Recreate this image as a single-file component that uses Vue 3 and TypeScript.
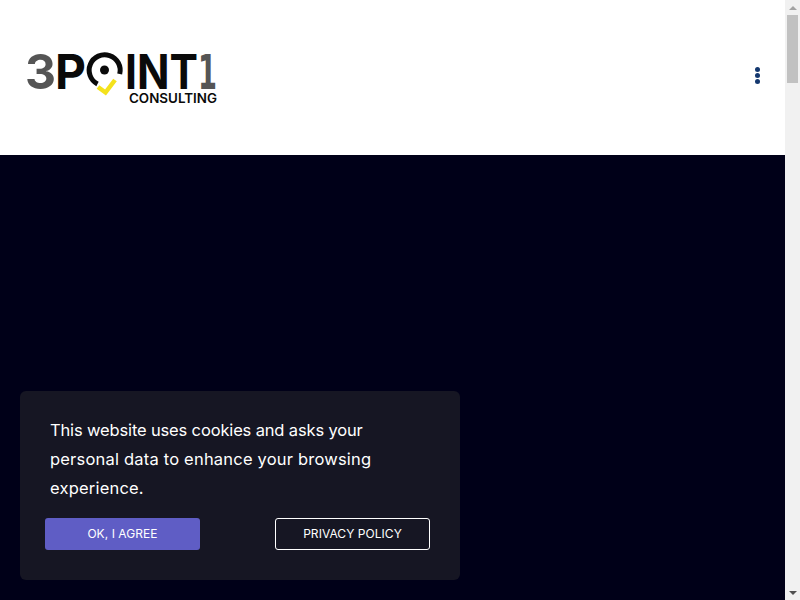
<script setup lang="ts">
const lines: string[] = [
  'This website uses cookies and asks your',
  'personal data to enhance your browsing',
  'experience.',
]
</script>

<template>
  <div class="page">
    <div class="view">
      <header class="top">
        <a class="logo" aria-label="3Point1 Consulting">
          <svg width="200" height="80" viewBox="0 0 200 80">
            <text class="mark grey" x="0" y="52" textLength="31" lengthAdjust="spacingAndGlyphs">3</text>
            <text class="mark" x="30" y="52" textLength="31" lengthAdjust="spacingAndGlyphs">P</text>
            <path d="M72.5 47 A15.5 15.5 0 1 1 94.7 37" fill="none" stroke="#0a0a0a" stroke-width="5" />
            <circle cx="79.5" cy="33" r="4.5" fill="#0a0a0a" />
            <path d="M73 50 L80.5 55.5 L90 43" fill="none" stroke="#f4e21c" stroke-width="4.5" />
            <text class="mark" x="100" y="52" textLength="73" lengthAdjust="spacingAndGlyphs">INT</text>
            <text class="mark grey one" x="173" y="52" textLength="19" lengthAdjust="spacingAndGlyphs">1</text>
            <text class="sub" x="104" y="66" textLength="88" lengthAdjust="spacingAndGlyphs">CONSULTING</text>
          </svg>
        </a>
        <button class="menu" aria-label="Menu"><i></i><i></i><i></i></button>
      </header>
      <main class="hero"></main>
      <aside class="cookie">
        <p class="message">
          <span v-for="line in lines" :key="line">{{ line }}</span>
        </p>
        <div class="actions">
          <button class="btn agree">OK, I AGREE</button>
          <button class="btn policy">PRIVACY POLICY</button>
        </div>
      </aside>
    </div>
    <div class="scrollbar" aria-hidden="true">
      <span class="arrow up"></span>
      <div class="track"><div class="thumb"></div></div>
      <span class="arrow down"></span>
    </div>
  </div>
</template>

<style>
html, body { margin: 0; }
</style>

<style scoped>
.page {
  display: flex;
  width: 800px;
  height: 600px;
  overflow: hidden;
  font-family: "Inter", "Noto Sans", sans-serif;
}
.view {
  position: relative;
  flex: 1;
  display: flex;
  flex-direction: column;
}
.top {
  height: 155px;
  flex: none;
  background: #fff;
  display: flex;
  align-items: center;
  justify-content: space-between;
  padding: 0 25px;
  box-sizing: border-box;
}
.logo { display: block; height: 80px; margin-bottom: 1px; }
.logo svg { display: block; }
.mark { font-family: "Inter", sans-serif; font-size: 48px; font-weight: 700; fill: #0a0a0a; }
.one { font-family: "DejaVu Sans", sans-serif; }
.grey { fill: #555; }
.sub { font-family: "Inter", sans-serif; font-size: 13px; font-weight: 600; fill: #0a0a0a; }
.menu {
  display: flex;
  flex-direction: column;
  gap: 1px;
  background: none;
  border: 0;
  padding: 0;
  margin: -4px 0 0;
}
.menu i { width: 5px; height: 5px; border-radius: 50%; background: #14386f; }
.hero { flex: 1; background: #000018; }
.cookie {
  position: absolute;
  left: 20px;
  bottom: 20px;
  width: 440px;
  height: 189px;
  box-sizing: border-box;
  padding: 25px 30px 30px 25px;
  background: #161623;
  border-radius: 6px;
  color: #fff;
}
.message {
  margin: 0 0 15px;
  padding-left: 5px;
  font-size: 16.5px;
  line-height: 29px;
  height: 87px;
}
.message span { display: block; white-space: nowrap; letter-spacing: 0.2px; }
.message span:first-child { letter-spacing: -0.15px; }
.actions { display: flex; justify-content: space-between; }
.btn {
  width: 155px;
  height: 32px;
  box-sizing: border-box;
  border-radius: 3px;
  font-family: inherit;
  font-size: 12px;
  letter-spacing: 0.05px;
  color: #fff;
  padding: 0 0 2px;
}
.agree { background: #5f5dc5; border: 0; }
.policy { background: transparent; border: 1px solid #fff; }
.scrollbar {
  flex: none;
  width: 15px;
  display: flex;
  flex-direction: column;
  background: #f1f1f1;
}
.arrow { flex: none; height: 15px; display: flex; align-items: center; justify-content: center; }
.arrow::before {
  content: "";
  border-left: 4px solid transparent;
  border-right: 4px solid transparent;
}
.up::before { border-bottom: 4px solid #a3a3a3; }
.down::before { border-top: 4px solid #505050; }
.track { flex: 1; padding: 0 2px; }
.thumb { height: 68px; background: #c1c1c1; }
</style>
